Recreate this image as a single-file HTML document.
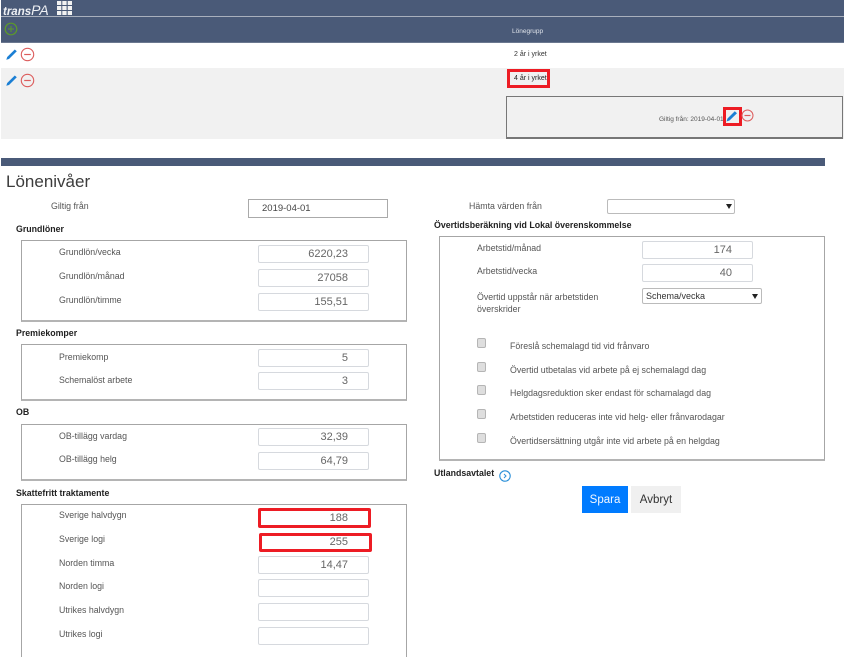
<!DOCTYPE html>
<html lang="sv">
<head>
<meta charset="utf-8">
<title>Lönenivåer</title>
<style>
html,body{margin:0;padding:0;background:#fff}
#p{position:relative;width:844px;height:657px;overflow:hidden;background:#fff;font-family:"Liberation Sans",sans-serif;color:#555;font-size:8.8px}
#p div,#p svg{position:absolute;box-sizing:border-box}
.t{white-space:nowrap;line-height:12px}
.b{font-weight:bold;color:#222;font-size:8.8px}
.i{left:258px;width:111px;height:18px;border:1px solid #d6d9de;border-radius:2px;background:#fff;text-align:right;padding-right:20px;font-size:11px;line-height:17px;color:#666}
.r{left:642px;width:111px;height:18px;border:1px solid #d6d9de;border-radius:2px;background:#fff;text-align:right;padding-right:20px;font-size:11px;line-height:17px;color:#666}
.f{border:1px solid #a6a6a6;border-bottom:2px solid #b4b4b4}
.red{border:3px solid #ed1c24}
.c{left:477px;width:9px;height:10px;background:#dedede;border:1px solid #b5b5b5;border-radius:2px}
</style>
</head>
<body>
<div id="p">
<div style="left:1px;top:0;width:843px;height:16px;background:#4a5a78"></div>
<div style="left:1px;top:16px;width:843px;height:1px;background:#a9b0bd"></div>
<div style="left:1px;top:17px;width:843px;height:25px;background:#4a5a78"></div>
<div style="left:1px;top:42px;width:843px;height:1px;background:#6b7890"></div>
<div class="t" style="left:3px;top:2px;font-size:11.500px;line-height:16px;font-style:italic;font-weight:bold;color:#eef0f4">trans<span style="font-size:14px;font-weight:normal">PA</span></div>
<svg style="left:57px;top:1px" width="15" height="14" viewBox="0 0 15 14" fill="#f2f2f2"><rect width="4.300" height="4"/><rect x="5.300" width="4.300" height="4"/><rect x="10.700" width="4.300" height="4"/><rect y="5" width="4.300" height="4"/><rect x="5.300" y="5" width="4.300" height="4"/><rect x="10.700" y="5" width="4.300" height="4"/><rect y="10" width="4.300" height="4"/><rect x="5.300" y="10" width="4.300" height="4"/><rect x="10.700" y="10" width="4.300" height="4"/></svg>
<svg style="left:4px;top:22px" width="14" height="14" viewBox="0 0 14 14" fill="none" stroke="#5c9a2a"><circle cx="7" cy="7" r="5.800" stroke-width="1.200"/><path d="M4 7H10M7 4V10"/></svg>
<div class="t" style="left:512px;top:26px;font-size:6.500px;color:#dfe3ea">Lönegrupp</div>

<div style="left:1px;top:68px;width:843px;height:71px;background:#f1f1f1"></div>

<svg style="left:6px;top:49px" width="12" height="11" viewBox="0 0 12 11"><path d="M0.300 10.800L1.200 8L8.800 0.500L10.800 2.300L3 10Z" fill="#1b7fd4"/></svg>
<svg style="left:20px;top:47px" width="15" height="15" viewBox="0 0 15 15" fill="none" stroke="#dc5c5c"><circle cx="7.500" cy="7.500" r="6.200" stroke-width="1.100"/><path d="M4.200 7.500H10.800" stroke-width="1.200"/></svg>
<div class="t" style="left:514px;top:48px;font-size:7px;color:#333;padding-top:0.500px">2 år i yrket</div>

<svg style="left:6px;top:75px" width="12" height="11" viewBox="0 0 12 11"><path d="M0.300 10.800L1.200 8L8.800 0.500L10.800 2.300L3 10Z" fill="#1b7fd4"/></svg>
<svg style="left:20px;top:73px" width="15" height="15" viewBox="0 0 15 15" fill="none" stroke="#dc5c5c"><circle cx="7.500" cy="7.500" r="6.200" stroke-width="1.100"/><path d="M4.200 7.500H10.800" stroke-width="1.200"/></svg>
<div class="red" style="left:507px;top:69px;width:43px;height:19px"></div>
<div class="t" style="left:514px;top:73px;font-size:7px;color:#222">4 år i yrket</div>

<div style="left:506px;top:96px;width:337px;height:43px;border:1px solid #777;border-bottom-width:2px"></div>
<div class="t" style="left:659px;top:114px;font-size:6.500px;color:#555">Giltig från: 2019-04-01</div>
<svg style="left:726px;top:110px" width="12" height="12" viewBox="0 0 12 12"><path d="M0.500 11.500L1.500 8.500L8.800 1.200L11 3.200L3.500 10.500Z" fill="#1b7fd4"/></svg>
<div class="red" style="left:723px;top:107px;width:19px;height:19px"></div>
<svg style="left:741px;top:109px" width="13" height="13" viewBox="0 0 13 13" fill="none" stroke="#dc5c5c"><circle cx="6.500" cy="6.500" r="5.500"/><path d="M3.500 6.500H9.500" stroke-width="1.200"/></svg>

<div style="left:1px;top:158px;width:824px;height:8px;background:#4a5a78"></div>
<div class="t" style="left:6px;top:172px;font-size:17px;line-height:20px;color:#3c3c3c">Lönenivåer</div>

<div class="t" style="left:51px;top:200px">Giltig från</div>
<div style="left:248px;top:199px;width:140px;height:19px;border:1px solid #aaa;font-size:9.500px;line-height:18px;padding-left:13px;color:#444">2019-04-01</div>

<div class="t b" style="left:16px;top:223px">Grundlöner</div>
<div class="f" style="left:21px;top:240px;width:386px;height:82px"></div>
<div class="t" style="left:59px;top:246px">Grundlön/vecka</div><div class="i" style="top:245px">6220,23</div>
<div class="t" style="left:59px;top:270px">Grundlön/månad</div><div class="i" style="top:269px">27058</div>
<div class="t" style="left:59px;top:294px">Grundlön/timme</div><div class="i" style="top:293px">155,51</div>

<div class="t b" style="left:16px;top:327px">Premiekomper</div>
<div class="f" style="left:21px;top:344px;width:386px;height:57px"></div>
<div class="t" style="left:59px;top:351px">Premiekomp</div><div class="i" style="top:349px">5</div>
<div class="t" style="left:59px;top:374px">Schemalöst arbete</div><div class="i" style="top:372px">3</div>

<div class="t b" style="left:16px;top:406px">OB</div>
<div class="f" style="left:21px;top:424px;width:386px;height:57px"></div>
<div class="t" style="left:59px;top:430px">OB-tillägg vardag</div><div class="i" style="top:428px">32,39</div>
<div class="t" style="left:59px;top:453px">OB-tillägg helg</div><div class="i" style="top:452px">64,79</div>

<div class="t b" style="left:16px;top:487px">Skattefritt traktamente</div>
<div class="f" style="left:21px;top:504px;width:386px;height:170px"></div>
<div class="t" style="left:59px;top:509px">Sverige halvdygn</div><div class="i" style="top:508px;border:3px solid #ed1c24;left:258px;width:113px;height:20px;line-height:14px;padding-right:20px">188</div>
<div class="t" style="left:59px;top:533px">Sverige logi</div><div class="i" style="top:533px;border:3px solid #ed1c24;left:259px;width:113px;height:19px;line-height:13px;padding-right:21px">255</div>
<div class="t" style="left:59px;top:557px">Norden timma</div><div class="i" style="top:556px">14,47</div>
<div class="t" style="left:59px;top:580px">Norden logi</div><div class="i" style="top:579px"></div>
<div class="t" style="left:59px;top:604px">Utrikes halvdygn</div><div class="i" style="top:603px"></div>
<div class="t" style="left:59px;top:628px">Utrikes logi</div><div class="i" style="top:627px"></div>

<div class="t" style="left:469px;top:200px">Hämta värden från</div>
<div style="left:607px;top:199px;width:128px;height:15px;border:1px solid #bbb;border-radius:2px"></div>
<div style="left:726px;top:204px;width:0;height:0;border-left:3px solid transparent;border-right:3px solid transparent;border-top:5px solid #222"></div>

<div class="t b" style="left:434px;top:219px">Övertidsberäkning vid Lokal överenskommelse</div>
<div class="f" style="left:439px;top:236px;width:386px;height:225px"></div>
<div class="t" style="left:477px;top:242px">Arbetstid/månad</div><div class="r" style="top:241px">174</div>
<div class="t" style="left:477px;top:265px">Arbetstid/vecka</div><div class="r" style="top:264px">40</div>
<div class="t" style="left:477px;top:291px;line-height:12px">Övertid uppstår när arbetstiden<br>överskrider</div>
<div style="left:642px;top:288px;width:120px;height:16px;border:1px solid #bbb;border-radius:2px;font-size:9px;line-height:15px;padding-left:3px;color:#333">Schema/vecka</div>
<div style="left:752px;top:294px;width:0;height:0;border-left:3px solid transparent;border-right:3px solid transparent;border-top:5px solid #222"></div>

<div class="c" style="top:338px"></div><div class="t" style="left:510px;top:340px">Föreslå schemalagd tid vid frånvaro</div>
<div class="c" style="top:362px"></div><div class="t" style="left:510px;top:364px">Övertid utbetalas vid arbete på ej schemalagd dag</div>
<div class="c" style="top:385px"></div><div class="t" style="left:510px;top:387px">Helgdagsreduktion sker endast för schamalagd dag</div>
<div class="c" style="top:409px"></div><div class="t" style="left:510px;top:411px">Arbetstiden reduceras inte vid helg- eller frånvarodagar</div>
<div class="c" style="top:433px"></div><div class="t" style="left:510px;top:435px">Övertidsersättning utgår inte vid arbete på en helgdag</div>

<div class="t b" style="left:434px;top:467px">Utlandsavtalet</div>
<svg style="left:499px;top:470px" width="12" height="12" viewBox="0 0 12 12" fill="none" stroke="#2a8fd8"><circle cx="6" cy="6" r="5.200" stroke-width="1.100"/><path d="M5 4L7 6L5 8"/></svg>

<div style="left:582px;top:486px;width:46px;height:27px;background:#007bff;color:#f4f8ff;font-size:11.500px;line-height:28px;text-align:center">Spara</div>
<div style="left:631px;top:486px;width:50px;height:27px;background:#f0f0f0;color:#333;font-size:11.500px;line-height:28px;text-align:center">Avbryt</div>
</div>
</body>
</html>
